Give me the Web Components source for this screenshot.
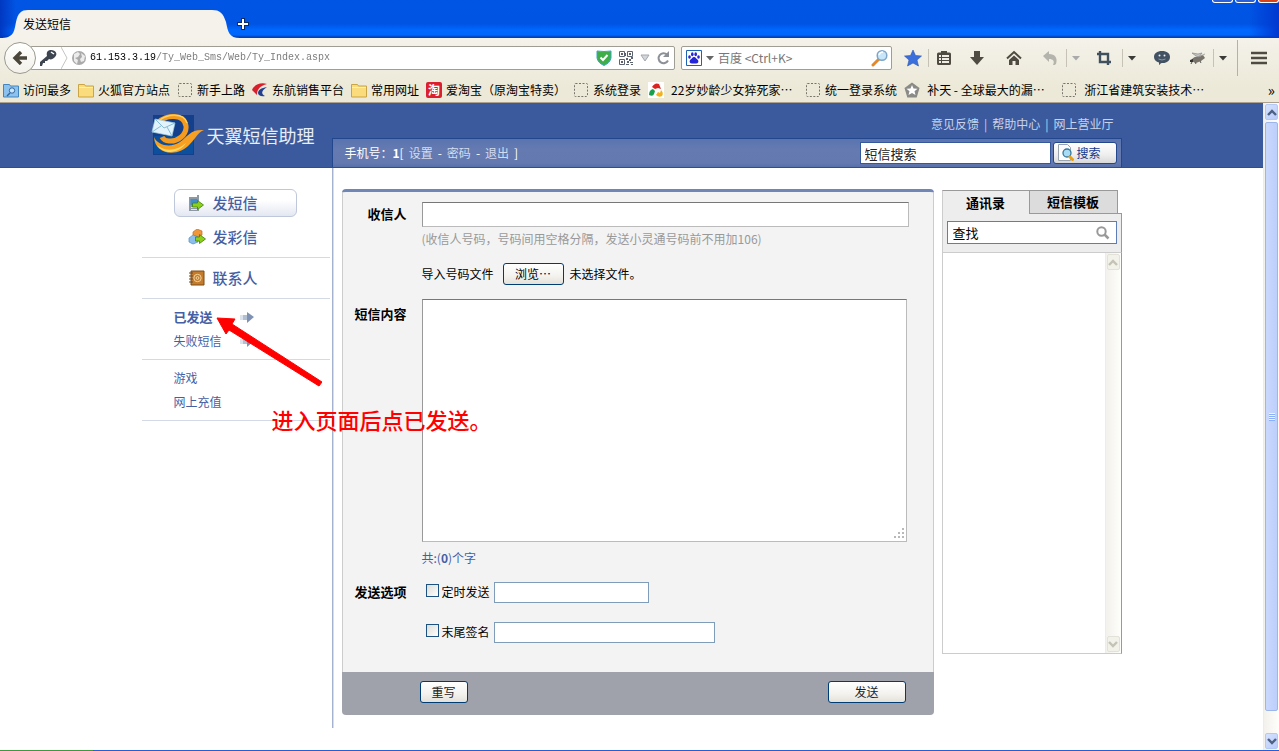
<!DOCTYPE html>
<html lang="zh-CN">
<head>
<meta charset="utf-8">
<title>发送短信</title>
<style>
  body {
    margin: 0;
    background: #fff;
    color: #000;
    font: 12px/16px "Noto Sans CJK SC", sans-serif;
  }
</style>
</head>
<body>
<browser-window></browser-window>

<script>
// shared by every shadow root
const BASE = `
  * { box-sizing: border-box; }
  button, input, textarea { margin: 0; font: inherit; color: inherit; outline: 0; }
  button { padding: 0; border: 0; background: none; }
  a { color: inherit; text-decoration: none; }
  ui-icon { flex: none; }
`;

const ICONS = {
  back: [16, 14, `<path d="M9 1 3 7l6 6M3 7h12" fill="none" stroke="#4a463c" stroke-width="3.400"/>`],
  key: [20, 18, `<path d="M2 17v-4l7-6C8 3 10 1 13 1c5 0 7 4 4 7-2 2-4 3-6 2l-2 2H7v2H5l-1 3z" fill="#3d4550"/><path d="m13 3 3 2" stroke="#fff" stroke-width="1.500"/>`],
  globe: [16, 16, `<circle cx="8" cy="8" r="7" fill="#aaa"/><path d="M3 4l4-2 2 2-2 3-3 1 3 2-1 4-3-3zM10 3l4 3-1 5-3 1-1-3 2-2z" fill="#ececec"/>`],
  shield: [16, 16, `<path d="M1 1q7 1 14 0v7q-1 5-7 7.500Q2 13 1 8z" fill="#3fae49" stroke="#38a6c0"/><path d="M4.500 7.500 7 10l4.500-5" fill="none" stroke="#fff" stroke-width="2"/>`],
  qr: [16, 16, `<path d="M1.500 1.500h5v5h-5zM9.500 1.500h5v5h-5zM1.500 9.500h5v5h-5z" fill="none" stroke="#5d6470"/><path d="M3 3h2v2H3zM11 3h2v2h-2zM3 11h2v2H3zM8 8h2v2H8zM11 9h2v2h-2zM13 7h2v2h-2zM9 11h2v2H9zM12 12h3v1h-3zM8 14h3v1H8zM13 14h2v1h-2zM7 3h1v3H7z" fill="#5d6470"/>`],
  drop: [10, 8, `<path d="M1 1h8L5 7z" fill="#d4d6da" stroke="#a2a7b0"/>`],
  reload: [14, 14, `<path d="M12 9.500a5 5 0 1 1-1-6" fill="none" stroke="#8c9097" stroke-width="2"/><path d="M13 0v6H7z" fill="#8c9097"/>`],
  paw: [16, 16, `<path d="M.5.500h15v15H.500z" fill="#fff" stroke="#1a63b5"/><path d="M8 7c2 0 2 2 4 3 1 2 0 3.500-2 3.500H6c-2 0-3-1.500-2-3.500 2-1 2-3 4-3z" fill="#2424d8"/><g fill="#2424d8"><ellipse cx="3.500" cy="7" rx="1.300" ry="1.800"/><ellipse cx="6.300" cy="4.200" rx="1.300" ry="2"/><ellipse cx="9.700" cy="4.200" rx="1.300" ry="2"/><ellipse cx="12.500" cy="7" rx="1.300" ry="1.800"/></g>`],
  caret: [8, 5, `<path d="M0 0h8L4 4.500z" fill="currentColor"/>`],
  lens: [18, 18, `<path d="m2 16 6-6" stroke="#e08a30" stroke-width="3" stroke-linecap="round"/><circle cx="11" cy="6.500" r="4.800" fill="#c8e6fa" stroke="#7da5c8" stroke-width="1.500"/><path d="M8 6q1-3 4-3" stroke="#fff" stroke-width="1.500" fill="none"/>`],
  star: [18, 18, `<path d="m9 1 2.500 5.500 6 .5-4.500 4 1.500 6L9 14l-5.500 3L5 11 .500 7l6-.5z" fill="#3a6fdc" stroke="#2d55b0" stroke-width=".6"/>`],
  list: [16, 16, `<path d="M1 4q0-1.500 1.500-1.500H5V1h6v1.500h2.500Q15 2.500 15 4v9.500q0 1.500-1.500 1.500h-11Q1 15 1 13.500z" fill="#4f4b42"/><path d="M3 5h2v2H3zM6 5h7v2H6zM3 8h2v2H3zM6 8h7v2H6zM3 11h2v2H3zM6 11h7v2H6z" fill="#f0eee4"/>`],
  down: [16, 16, `<path d="M5 1h6v6h4l-7 8-7-8h4z" fill="#4f4b42"/>`],
  home: [16, 16, `<path d="M1 8.500 8 2l7 6.500" fill="none" stroke="#4f4b42" stroke-width="2"/><path d="M3 10l5-4.500L13 10v5H9.500v-4h-3v4H3z" fill="#4f4b42"/>`],
  undo: [16, 16, `<path d="M1 6l6-5v3c6 0 9 4 7 10-1 1-2 1-3 1 2-4 0-6-4-6v3z" fill="#b4b3ac"/>`],
  crop: [16, 16, `<path d="M4 1v11h11M1 4h11v11" fill="none" stroke="#40505f" stroke-width="2.400"/>`],
  bubble: [18, 16, `<path d="M9 1c5 0 8 2.500 8 6s-3 6-7 6c-2 0-2 0-3.500 2-.5 0-.5-1-.5-2.500C3 11.500 1 10 1 7c0-3.500 3-6 8-6z" fill="#435263"/><circle cx="6.500" cy="5.500" r="1" fill="#eee"/><circle cx="11.500" cy="5.500" r="1" fill="#eee"/><path d="M5.500 9q3.500 2 7 0" fill="none" stroke="#8795a5"/>`],
  fly: [18, 16, `<path d="M2 11c1-3 4-5 8-4l4-2 2 3-4 3-5 2z" fill="#77736a"/><path d="M7 6 3 3l6 1 4-1-3 4zM9 7l7-3" fill="#c4c4c0" stroke="#888" stroke-width=".7"/><path d="m3 12-1 2m4-2 1 2m4-3 1 2" stroke="#555"/><path d="m1 10 3-1v3H1z" fill="#333"/>`],
  menu: [16, 14, `<path d="M0 2h16M0 7h16M0 12h16" stroke="#4f4b42" stroke-width="2.500"/>`],
  visited: [16, 16, `<path d="M.5 2.500h6l1 1.500h8v11H.500z" fill="#8bc2ee" stroke="#4585bf"/><circle cx="9" cy="8.500" r="2.700" fill="#c8e6fc" stroke="#34679e"/><path d="m7 11-3 3" stroke="#34679e" stroke-width="1.500"/>`],
  folder: [16, 16, `<path d="M.5 2.500h6l1 1.500h8v11H.500z" fill="#fbdc7c" stroke="#c9a545"/><path d="M1 5.500h14" stroke="#fff0b4"/>`],
  blank: [16, 16, `<rect x="1.500" y="1.500" width="13" height="13" rx="1" fill="none" stroke="#77746a" stroke-dasharray="2 1.500"/>`],
  airline: [16, 16, `<path d="M15 2C8 0 2 3 0 8l5 5c0-6 3-9 10-11z" fill="#d91f2c"/><path d="M15 5c-6 1-9 3-9 6 0 2 3 4 7 3-4-2-4-5 2-9z" fill="#22408f"/>`],
  swirl: [16, 16, `<path d="M0 0h16v16H0z" fill="#fff"/><path d="M4 5q3-5 7-3l2 5-3-1-3 1z" fill="#dc241c"/><path d="M1 13q0-5 4-6l2 2-1 3q-1 3-5 1z" fill="#18a04a"/><path d="M8 13l2-3 2 1 1-3q3 3 1 6-3 2-6-1z" fill="#f3b21c"/>`],
  pentagon: [16, 16, `<path d="M8 .5 15.500 6l-2.800 9.500H3.300L.500 6z" fill="#8a8a86"/><path d="m8 3 1.500 3.500 4 .3-3 2.500 1 3.700L8 11l-3.500 2 1-3.700-3-2.500 4-.3z" fill="#fff"/>`],
  logo: [54, 42, `
    <path d="M3 1h41v40H3z" fill="#143f8a"/><path d="M4 22h39v18H4z" fill="#0c4f9c"/>
    <path d="M9 8C15 1 34-1 36 12c1 9-9 16-17 15-4 0-6-2-7-4" fill="none" stroke="#f39a1f" stroke-width="5"/>
    <path d="M9 7C16 0 34-2 37 9" fill="none" stroke="#ffd05a" stroke-width="1.500"/>
    <path d="m5 5 20 4-3 13-20-4z" fill="#e2f3fb" stroke="#9ecbe2" stroke-width=".7"/>
    <path d="m5 5 9 9 11-5M2 18l9-6m6 1 5 9" fill="none" stroke="#86bcd9"/>
    <path d="M4 23c4 9 17 11 26 5 8-6 11-13 24-12-6 2-8 8-14 14C29 43 5 42 4 23z" fill="#f7a021"/>
    <path d="M7 31c8 7 20 6 29-2-6 10-22 13-29 2z" fill="#ffd860"/>`],
  sms: [16, 16, `<path d="M1 2h8V0h2v16H1z" fill="#8d9aa4"/><path d="M2.500 4h7v6h-7z" fill="#3f8fd0"/><path d="M3 12.500h6M3 14.500h6" stroke="#dfe5e8"/><path d="M4.500 8h5V5.500l6 4.500-6 4.500V12h-5z" fill="#8bd019" stroke="#3f7d10" stroke-width=".8"/>`],
  mms: [18, 16, `<path d="m5 3 4-3 5 2v4l-4 2-5-2z" fill="#f0973a" stroke="#c66a1c" stroke-width=".7"/><path d="m1 9 4-3 5 2v5l-5 2-4-2z" fill="#8cc0ea" stroke="#4f8cc0" stroke-width=".7"/><path d="M7.500 8h4V5.500l6 4.500-6 4.500V12h-4z" fill="#8bd019" stroke="#3f7d10" stroke-width=".8"/>`],
  contacts: [17, 16, `<path d="M3 1h13v14H3z" fill="#c47c2c" stroke="#7f4a14"/><circle cx="9.500" cy="8" r="3.700" fill="none" stroke="#f4d49c"/><circle cx="9.500" cy="8" r="1.400" fill="none" stroke="#f4d49c"/><path d="M1 3h4M1 6h4M1 9h4M1 12h4" stroke="#6a4a2a"/>`],
  go: [16, 12, `<path d="M1 4h4v5H1z" fill="#dde3ec"/><path d="M4 4h5v5H4z" fill="#b3bfd2"/><path d="M8 4V1l7 5-7 6z" fill="#7f92b3"/>`],
  find: [16, 18, `<path d="M.5.500h9l3 3v13H.500z" fill="#fdfdfd" stroke="#9aa4ae"/><circle cx="9" cy="9" r="4" fill="#a8dcf5" stroke="#37789e" stroke-width="1.300"/><path d="m12 13 2.500 2.500" stroke="#e6a11c" stroke-width="3" stroke-linecap="round"/>`],
  glass: [14, 14, `<circle cx="5.500" cy="5.500" r="4.200" fill="none" stroke="#999" stroke-width="2"/><path d="m8.500 8.500 4 4" stroke="#999" stroke-width="2.500"/>`],
  up: [10, 7, `<path d="m1 6 4-4 4 4" fill="none" stroke="currentColor" stroke-width="2.400"/>`],
  dn: [10, 7, `<path d="m1 1 4 4 4-4" fill="none" stroke="currentColor" stroke-width="2.400"/>`],
  grip: [14, 14, `<path d="M10 1h2v2h-2zM6 5h2v2H6zM10 5h2v2h-2zM2 9h2v2H2zM6 9h2v2H6zM10 9h2v2h-2z" fill="#b9b9b9"/>`],
};

class ShadowElement extends HTMLElement {
  constructor() {
    super();
    this.attachShadow({ mode: "open" });
  }
  connectedCallback() {
    this.shadowRoot.innerHTML = `<style>${BASE}${this.css}</style>${this.html}`;
  }
  get css() {
    return "";
  }
}

class UiIcon extends ShadowElement {
  get css() {
    return `:host { display: inline-block; } svg { display: block; }`;
  }
  get html() {
    const [w, h, body] = ICONS[this.getAttribute("name")];
    return `<svg width="${w}" height="${h}" viewBox="0 0 ${w} ${h}" aria-hidden="true">${body}</svg>`;
  }
}
customElements.define("ui-icon", UiIcon);

class TitleBar extends ShadowElement {
  get css() {
    return `
      :host {
        display: flex;
        height: 38px;
        background: linear-gradient(90deg, #0038c0, transparent 16px, transparent calc(100% - 30px), #0038d0),
          linear-gradient(#0055e5, #0054e3 24px, #0068ff 30px, #0066fb 35px, #0040b8 37px);
      }
      .tab { position: relative; width: 237px; height: 38px; padding: 16px 23px 6px; }
      .tab svg { position: absolute; inset: 0; }
      .tab span { position: relative; }
      .new { width: 12px; height: 12px; margin-top: 18px; }
      .new svg { display: block; }
      .controls { display: flex; gap: 2px; margin-left: auto; }
      .controls button {
        width: 21px;
        height: 3px;
        border: 1px solid #fff;
        border-top: 0;
        border-radius: 0 0 3px 3px;
        background: #2a60d8;
      }
      .controls .close { background: #d8431c; }
    `;
  }
  get html() {
    return `
      <div class="tab">
        <svg width="240" height="38"><path d="M0 38c14 0 14-6 16-16 2-9 5-12 12-12h184c8 0 11 3 14 12 2 10 3 16 14 16z" fill="#f4f2ea"/></svg>
        <span>发送短信</span>
      </div>
      <button class="new" aria-label="新标签页">
        <svg width="12" height="12"><path d="M4 0h4v4h4v4H8v4H4V8H0V4h4z" fill="#0a2a66"/><path d="M5 1h2v4h4v2H7v4H5V7H1V5h4z" fill="#fff"/></svg>
      </button>
      <div class="controls">
        <button aria-label="最小化"></button><button aria-label="最大化"></button><button class="close" aria-label="关闭"></button>
      </div>`;
  }
}
customElements.define("title-bar", TitleBar);

class NavBar extends ShadowElement {
  get css() {
    return `
      :host { display: flex; align-items: center; height: 40px; padding-left: 4px; }
      .back {
        z-index: 1;
        display: grid;
        place-items: center;
        width: 32px;
        height: 32px;
        border: 1px solid #9a9a92;
        border-radius: 50%;
        background: linear-gradient(#fff, #f2f0e8);
      }
      .field {
        display: flex;
        align-items: center;
        height: 24px;
        border: 1px solid #a09e94;
        border-radius: 2px;
        background: #fff;
      }
      .url { flex: 1; gap: 3px; margin-left: -6px; padding: 0 4px 0 7px; }
      .url svg { flex: none; }
      .url .tail { display: flex; align-items: center; gap: 6px; }
      .field input { flex: 1; min-width: 0; padding: 0; border: 0; background: none; }
      /* host in black, path in grey */
      .url input {
        font: 10px/16px "Liberation Mono", monospace;
        background: linear-gradient(90deg, #000 66px, #777 66px);
        -webkit-background-clip: text;
        background-clip: text;
        color: transparent;
      }
      .search { width: 211px; margin: 0 6px; padding: 0 2px 0 4px; gap: 4px; color: #666; }
      .search .caret { display: flex; }
      ::placeholder { color: #777; opacity: 1; }
      .tools {
        display: grid;
        grid-template-columns: 30px 1px 30px 36px 38px 33px 1px 18px 37px 1px 18px 42px 30px 1px 18px 5px 1px 41px;
        align-items: center;
        color: #3a3a36;
      }
      .tools button { display: grid; place-items: center; height: 24px; }
      .tools i { height: 18px; background: #c6c3b6; }
      .tools .off { color: #aaa; }
      .tools .tall { grid-column: 17; height: 36px; background: #aeb2b8; }
    `;
  }
  get html() {
    const tool = (name, label, cls = "") =>
      `<button class="${cls}" aria-label="${label}"><ui-icon name="${name}"></ui-icon></button>`;
    return `
      <button class="back" aria-label="后退"><ui-icon name="back"></ui-icon></button>
      <div class="field url">
        <ui-icon name="key"></ui-icon>
        <svg width="7" height="22"><path d="M0 0l6 11-6 11" fill="none" stroke="#c4c4c0"/></svg>
        <ui-icon name="globe"></ui-icon>
        <input aria-label="地址" value="61.153.3.19/Ty_Web_Sms/Web/Ty_Index.aspx">
        <div class="tail">
          <ui-icon name="shield"></ui-icon><ui-icon name="qr"></ui-icon>
          <ui-icon name="drop"></ui-icon><ui-icon name="reload"></ui-icon>
        </div>
      </div>
      <div class="field search">
        <ui-icon name="paw"></ui-icon><span class="caret"><ui-icon name="caret"></ui-icon></span>
        <input aria-label="搜索" placeholder="百度 &lt;Ctrl+K&gt;">
        <ui-icon name="lens"></ui-icon>
      </div>
      <div class="tools">
        ${tool("star", "书签")}<i></i>${tool("list", "书签列表")}${tool("down", "下载")}${tool("home", "主页")}
        ${tool("undo", "撤销")}<i></i>${tool("caret", "撤销列表", "off")}
        ${tool("crop", "截图")}<i></i>${tool("caret", "截图选项")}
        ${tool("bubble", "消息")}${tool("fly", "插件")}<i></i>${tool("caret", "插件选项")}
        <i class="tall"></i>${tool("menu", "菜单")}
      </div>`;
  }
}
customElements.define("nav-bar", NavBar);

class BookmarkItem extends ShadowElement {
  get css() {
    return `
      :host { display: block; flex: none; }
      :host([wide]) { width: 150px; }
      a { display: flex; align-items: center; gap: 4px; white-space: nowrap; }
      :host([wide]) a { gap: 7px; }
      b {
        width: 16px;
        height: 16px;
        border-radius: 2px;
        background: #dc1f2e;
        color: #fff;
        line-height: 16px;
        text-align: center;
      }
    `;
  }
  get html() {
    const icon = this.getAttribute("icon");
    const mark = icon === "tao" ? "<b>淘</b>" : `<ui-icon name="${icon}"></ui-icon>`;
    return `<a href="#">${mark}<slot></slot></a>`;
  }
}
customElements.define("bookmark-item", BookmarkItem);

class BookmarkBar extends ShadowElement {
  get css() {
    return `
      :host { display: flex; align-items: center; gap: 7px; height: 25px; padding: 0 4px 0 3px; border-bottom: 1px solid #aca08e; }
      button { margin-left: auto; font-size: 15px; line-height: 16px; }
    `;
  }
  get html() {
    return `
      <bookmark-item icon="visited">访问最多</bookmark-item>
      <bookmark-item icon="folder">火狐官方站点</bookmark-item>
      <bookmark-item icon="blank">新手上路</bookmark-item>
      <bookmark-item icon="airline">东航销售平台</bookmark-item>
      <bookmark-item icon="folder">常用网址</bookmark-item>
      <bookmark-item icon="tao">爱淘宝（原淘宝特卖）</bookmark-item>
      <bookmark-item icon="blank">系统登录</bookmark-item>
      <bookmark-item icon="swirl" wide>22岁妙龄少女猝死家…</bookmark-item>
      <bookmark-item icon="blank">统一登录系统</bookmark-item>
      <bookmark-item icon="pentagon" wide>补天 - 全球最大的漏…</bookmark-item>
      <bookmark-item icon="blank" wide>浙江省建筑安装技术…</bookmark-item>
      <button aria-label="更多书签">»</button>`;
  }
}
customElements.define("bookmark-bar", BookmarkBar);

class XpScrollbar extends ShadowElement {
  get css() {
    return `
      :host {
        display: flex;
        flex-direction: column;
        flex: none;
        width: 16px;
        padding: 1px;
        border-left: 1px solid #eeede5;
        background: linear-gradient(90deg, #f3f1ec, #fefefb);
      }
      button {
        display: grid;
        place-items: center;
        height: 16px;
        border: 1px solid #b4c8f6;
        border-radius: 2px;
        background: linear-gradient(135deg, #d6e2fe, #b8ccfa);
        color: #4d6185;
      }
      .track { display: flex; flex: 1; flex-direction: column; padding-top: 2px; }
      .thumb {
        display: grid;
        place-items: center;
        flex: 27;
        border: 1px solid #9cb6ec;
        border-radius: 2px;
        background: linear-gradient(90deg, #cad8fd, #bccffb);
      }
      .thumb::before {
        content: "";
        width: 6px;
        height: 8px;
        background: repeating-linear-gradient(#eef4fe 0 1px, #8cb0f8 1px 2px);
      }
      .rest { flex: 1; }
      :host([disabled]) .track { visibility: hidden; }
      :host([disabled]) button { border-color: #e3e2d8; background: #f2f1ea; color: #c4c3b6; }
    `;
  }
  get html() {
    const off = this.hasAttribute("disabled") ? "disabled" : "";
    return `
      <button aria-label="向上" ${off}><ui-icon name="up"></ui-icon></button>
      <div class="track"><div class="thumb"></div><div class="rest"></div></div>
      <button aria-label="向下" ${off}><ui-icon name="dn"></ui-icon></button>`;
  }
}
customElements.define("xp-scrollbar", XpScrollbar);

class XpButton extends ShadowElement {
  get css() {
    return `
      :host { display: block; width: 48px; }
      button {
        display: block;
        width: 100%;
        height: 22px;
        border: 1px solid #003c74;
        border-radius: 3px;
        background: linear-gradient(#fff, #f3f2ee 60%, #e4e1d8);
      }
    `;
  }
  get html() {
    return `<button><slot></slot></button>`;
  }
}
customElements.define("xp-button", XpButton);

class SmsHeader extends ShadowElement {
  get css() {
    return `
      :host { display: block; border-bottom: 1px solid #2c4f90; background: #3b5a9d; color: #fff; }
      .inner { display: grid; grid-template-columns: 190px 1fr; max-width: 980px; margin: 0 auto; }
      .logo { display: flex; align-items: center; gap: 3px; padding-left: 8px; font-size: 18px; color: #e8eef9; white-space: nowrap; }
      .links { display: flex; justify-content: flex-end; gap: 5px; padding: 13px 8px 6px 0; color: #c8d3ea; }
      .bar {
        display: flex;
        align-items: center;
        height: 29px;
        padding: 0 4px 0 12px;
        border: 1px solid #23478c;
        border-bottom: 0;
        background: linear-gradient(#5a74b0, #647ab0 10px, #6379b0 24px, #5870ab);
      }
      .user { display: flex; gap: 5px; margin-right: auto; }
      .user a { color: #d3dcee; }
      input { width: 191px; height: 22px; padding: 0 4px; border: 1px solid #35579c; background: #fff; color: #222; font-size: 13px; }
      button {
        display: flex;
        align-items: center;
        gap: 3px;
        width: 64px;
        height: 22px;
        margin-left: 2px;
        padding-left: 4px;
        border: 1px solid #23478c;
        border-radius: 3px;
        background: linear-gradient(#fff, #eee 60%, #d8d8d8);
        color: #14388c;
      }
    `;
  }
  get html() {
    return `
      <div class="inner">
        <div class="logo"><ui-icon name="logo"></ui-icon><span>天翼短信助理</span></div>
        <div>
          <nav class="links"><a href="#">意见反馈</a><span>|</span><a href="#">帮助中心</a><span>|</span><a href="#">网上营业厅</a></nav>
          <form class="bar" onsubmit="return false">
            <div class="user"><span>手机号：<b>1</b>[</span><a href="#">设置</a><span>-</span><a href="#">密码</a><span>-</span><a href="#">退出</a><span>]</span></div>
            <input aria-label="短信搜索" value="短信搜索">
            <button><ui-icon name="find"></ui-icon>搜索</button>
          </form>
        </div>
      </div>`;
  }
}
customElements.define("sms-header", SmsHeader);

class SmsSidebar extends ShadowElement {
  get css() {
    return `
      :host {
        display: block;
        box-sizing: border-box;
        width: 191px;
        padding: 15px 2px 0 0;
        border-right: 1px solid #a4b2cf;
        box-shadow: 1px 0 #d5deec;
        color: #455fa4;
      }
      section { padding: 6px 0; border-bottom: 1px solid #d3d9e5; }
      a { display: flex; align-items: center; height: 24px; margin-left: 32px; }
      .big { width: 123px; height: 28px; gap: 8px; padding-left: 13px; border: 1px solid transparent; font-size: 15px; font-weight: 500; }
      .big ui-icon { width: 17px; }
      .big + .big { margin-top: 6px; }
      .on { border-color: #bfc8da; border-radius: 6px; background: linear-gradient(#fff 40%, #e3e7f1); }
      .strong { font-size: 13px; font-weight: bold; }
      .more { width: 81px; justify-content: space-between; }
    `;
  }
  get html() {
    return `
      <section>
        <a class="big on" href="#"><ui-icon name="sms"></ui-icon>发短信</a>
        <a class="big" href="#"><ui-icon name="mms"></ui-icon>发彩信</a>
      </section>
      <section><a class="big" href="#"><ui-icon name="contacts"></ui-icon>联系人</a></section>
      <section>
        <a class="more strong" href="#">已发送<ui-icon name="go"></ui-icon></a>
        <a class="more" href="#">失败短信<ui-icon name="go"></ui-icon></a>
      </section>
      <section><a href="#">游戏</a><a href="#">网上充值</a></section>`;
  }
}
customElements.define("sms-sidebar", SmsSidebar);

class SmsForm extends ShadowElement {
  get css() {
    return `
      :host { display: block; flex: 1; min-width: 0; margin: 21px 8px 13px 9px; }
      form { border-top: 3px solid #6f86b6; border-radius: 4px; background: #f3f3f3; overflow: hidden; }
      .body {
        display: grid;
        grid-template-columns: 64px 1fr;
        column-gap: 15px;
        padding: 10px 24px 11px 0;
        border: 1px solid #ccc;
        border-width: 0 1px;
      }
      .name { padding-top: 1px; font-size: 13px; font-weight: bold; line-height: 22px; text-align: right; }
      .name.text { padding-top: 4px; }
      .name.opts { padding-top: 0; }
      input, textarea { border: 1px solid #bbb; border-top-color: #777; border-left-color: #999; background: #fff; }
      .to { display: block; width: 100%; height: 25px; }
      .hint { line-height: 24px; color: #999; }
      .file { display: flex; align-items: center; gap: 6px; height: 22px; margin: 12px 0 14px; }
      .file span:first-child { margin-right: 3px; }
      .file xp-button { width: 61px; }
      .area { position: relative; margin-right: 2px; }
      textarea { display: block; width: 100%; height: 243px; resize: none; }
      .area ui-icon { position: absolute; right: 1px; bottom: 1px; }
      .count { padding: 4px 0 11px; line-height: 24px; color: #455fa4; }
      .option { display: flex; align-items: center; height: 22px; margin-bottom: 18px; padding-left: 4px; }
      .option input { height: 21px; border-color: #7f9db9; }
      .option [type=checkbox] {
        appearance: none;
        width: 13px;
        height: 13px;
        margin: 0 3px 4px 0;
        border: 1px solid #1c5180;
        background: linear-gradient(135deg, #dcdcd7, #fff);
      }
      .option label { margin-right: 4px; }
      #time { width: 155px; }
      #sign { width: 221px; }
      footer { display: flex; justify-content: space-between; height: 43px; padding: 9px 28px 0 78px; background: #9fa2aa; color: #222; }
      .send { width: 78px; }
    `;
  }
  get html() {
    return `
      <form onsubmit="return false">
        <div class="body">
          <label class="name" for="to">收信人</label>
          <div>
            <input class="to" id="to">
            <div class="hint">(收信人号码，号码间用空格分隔，发送小灵通号码前不用加106)</div>
            <div class="file"><span>导入号码文件</span><xp-button>浏览…</xp-button><span>未选择文件。</span></div>
          </div>
          <label class="name text" for="text">短信内容</label>
          <div>
            <div class="area"><textarea id="text"></textarea><ui-icon name="grip"></ui-icon></div>
            <div class="count">共:(<b>0</b>)个字</div>
          </div>
          <div class="name opts">发送选项</div>
          <div>
            <div class="option"><input type="checkbox" id="timed"><label for="timed">定时发送</label><input id="time" aria-label="发送时间"></div>
            <div class="option"><input type="checkbox" id="signed"><label for="signed">末尾签名</label><input id="sign" aria-label="签名"></div>
          </div>
        </div>
        <footer><xp-button>重写</xp-button><xp-button class="send">发送</xp-button></footer>
      </form>`;
  }
}
customElements.define("sms-form", SmsForm);

class ContactPanel extends ShadowElement {
  get css() {
    return `
      :host { display: block; width: 180px; margin-top: 22px; }
      .tabs { display: grid; grid-template-columns: 87px 89px; }
      .tabs button { height: 24px; border: 1px solid #999; background: #dcdcdc; font-size: 13px; font-weight: bold; line-height: 20px; }
      .tabs .on { border-width: 1px 0 0 1px; border-left-color: #ccc; background: #ededed; }
      .rest { display: grid; grid-template-columns: 176px 4px; }
      .rest::after { content: ""; border-bottom: 1px solid #999; }
      .find { padding: 7px 4px 8px; border: 1px solid #ccc; border-width: 0 1px 1px; border-right-color: #999; background: #ededed; }
      .find div { display: flex; align-items: center; height: 23px; padding: 0 6px 0 5px; border: 1px solid #5e7cb5; background: #fff; }
      .find input { flex: 1; min-width: 0; padding: 0; border: 0; background: none; font-size: 13px; }
      .list { display: flex; justify-content: flex-end; height: 401px; border: 1px solid #ccc; border-width: 0 1px 1px; border-right-color: #999; }
    `;
  }
  get html() {
    return `
      <div class="rest"><div class="tabs"><button class="on">通讯录</button><button>短信模板</button></div></div>
      <div class="find"><div><input aria-label="查找" value="查找"><ui-icon name="glass"></ui-icon></div></div>
      <div class="list"><xp-scrollbar disabled></xp-scrollbar></div>`;
  }
}
customElements.define("contact-panel", ContactPanel);

// red arrow and caption lying over the page
class PageNote extends ShadowElement {
  get css() {
    return `
      :host { position: absolute; z-index: 1; left: 74px; top: 149px; color: #f00; pointer-events: none; }
      svg { display: block; }
      p { margin: 14px 0 0 56px; font-size: 22px; font-weight: 500; line-height: 36px; white-space: nowrap; }
    `;
  }
  get html() {
    return `
      <svg width="106" height="70"><path d="M1 1l18 1-3 5 90 58-3 4L13 13l-3 4z" fill="#f00" stroke="#f00" stroke-linejoin="round"/></svg>
      <p><slot></slot></p>`;
  }
}
customElements.define("page-note", PageNote);

class SmsPage extends ShadowElement {
  get css() {
    return `
      :host { display: block; flex: 1; min-width: 0; }
      main { position: relative; display: flex; max-width: 980px; margin: 0 auto; }
      contact-panel { align-self: flex-start; }
    `;
  }
  get html() {
    return `
      <sms-header></sms-header>
      <main>
        <sms-sidebar></sms-sidebar>
        <sms-form></sms-form>
        <contact-panel></contact-panel>
        <page-note>进入页面后点已发送。</page-note>
      </main>`;
  }
}
customElements.define("sms-page", SmsPage);

class BrowserWindow extends ShadowElement {
  get css() {
    return `
      :host { display: flex; flex-direction: column; min-height: 100vh; }
      .chrome { background: linear-gradient(#f4f2ea, #ece9d8 50px); }
      .view { display: flex; flex: 1; }
      .edge { height: 1px; background: linear-gradient(90deg, #3c9a3c 93px, #245edb 93px); }
    `;
  }
  get html() {
    return `
      <title-bar></title-bar>
      <div class="chrome"><nav-bar></nav-bar><bookmark-bar></bookmark-bar></div>
      <div class="view"><sms-page></sms-page><xp-scrollbar></xp-scrollbar></div>
      <div class="edge"></div>`;
  }
}
customElements.define("browser-window", BrowserWindow);
</script>
</body>
</html>
